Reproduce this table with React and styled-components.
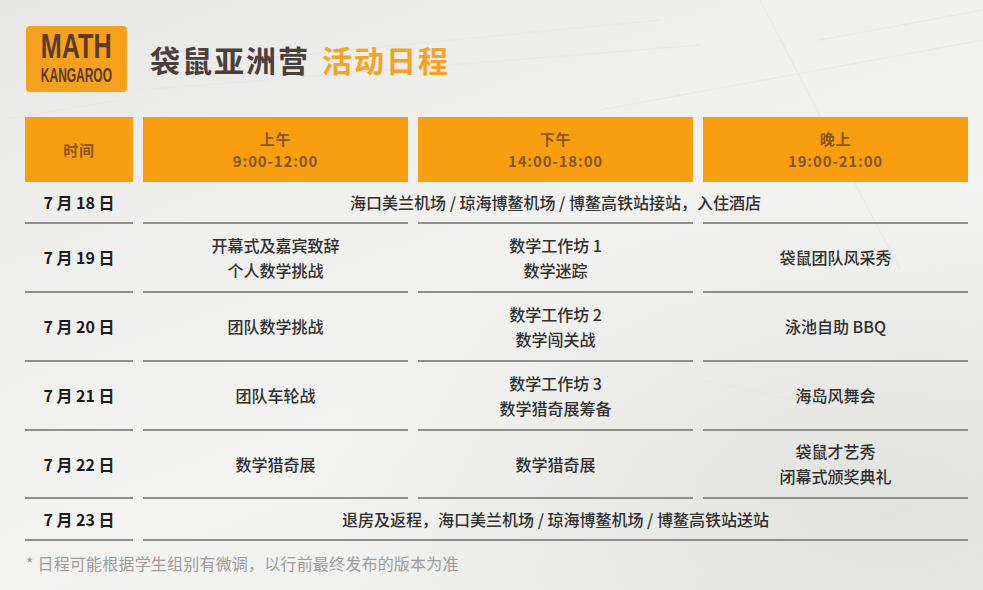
import React from 'react';
import styled, { createGlobalStyle } from 'styled-components';

const Global = createGlobalStyle`
  html, body { margin: 0; padding: 0; }
  body {
    width: 983px;
    height: 590px;
    overflow: hidden;
    font-family: "Noto Sans CJK SC", "Noto Sans", sans-serif;
  }
`;

const Page = styled.div`
  position: relative;
  width: 983px;
  height: 590px;
  box-sizing: border-box;
  padding: 26px 15px 0 25px;
  overflow: hidden;
  background:
    radial-gradient(ellipse at 90% 85%, rgba(215,215,212,0.55) 0%, rgba(240,240,238,0) 45%),
    linear-gradient(160deg, #e7e7e5 0%, #efefed 30%, #f3f3f1 60%, #eeeeec 100%);
`;

const Backdrop = styled.svg`
  position: absolute;
  inset: 0;
  pointer-events: none;
`;

const Content = styled.div`
  position: relative;
  display: flex;
  flex-direction: column;
`;

const TopBar = styled.div`
  display: flex;
  align-items: center;
  gap: 23px;
  padding-left: 1px;
`;

const Logo = styled.div`
  width: 101px;
  height: 66px;
  box-sizing: border-box;
  background: #f6a11c;
  border-radius: 4px;
  display: flex;
  flex-direction: column;
  align-items: center;
  justify-content: center;
  color: #5a3b27;
  font-family: "Liberation Sans", Arial, sans-serif;
  font-weight: 700;
  padding-bottom: 4px;
`;

const LogoWord = styled.span`
  display: block;
  font-size: ${p => p.$size}px;
  line-height: ${p => p.$lh}px;
  transform: scaleX(${p => p.$sx});
  white-space: nowrap;
`;

const Title = styled.h1`
  margin: 0;
  font-size: 30px;
  line-height: 36px;
  font-weight: 700;
  letter-spacing: 2px;
  color: #4a3f3b;
  white-space: nowrap;
`;

const Accent = styled.span`
  color: #f4a323;
  margin-left: 12px;
`;

const Table = styled.div`
  margin-top: 25px;
  display: grid;
  grid-template-columns: 108px 265px 275px 265px;
  column-gap: 10px;
`;

const HeadCell = styled.div`
  height: 65px;
  background: #f99e0f;
  display: flex;
  flex-direction: column;
  align-items: center;
  justify-content: center;
  color: #87561a;
  font-size: 15px;
  line-height: 22px;
  font-weight: 700;
  letter-spacing: 0.8px;
`;

const Cell = styled.div`
  height: ${p => p.$h}px;
  border-bottom: 2px solid #8e8e8c;
  display: flex;
  flex-direction: column;
  align-items: center;
  justify-content: center;
  font-size: 16px;
  line-height: 25px;
  font-weight: 500;
  color: #2f2f2f;
  text-align: center;
  white-space: nowrap;
`;

const DateCell = styled(Cell)`
  font-weight: 700;
  color: #1b1b1b;
`;

const SpanCell = styled.div`
  grid-column: 2 / 5;
  display: grid;
  grid-template-columns: 265px 275px 265px;
  grid-template-rows: ${p => p.$h}px 2px;
  column-gap: 10px;
  border-bottom: ${p => (p.$solid ? '2px solid #8e8e8c' : 'none')};
  height: ${p => (p.$solid ? `${p.$h}px` : 'auto')};
`;

const SpanText = styled.div`
  grid-column: 1 / 4;
  grid-row: 1;
  display: flex;
  align-items: center;
  justify-content: center;
  font-size: 16px;
  font-weight: 500;
  color: #2f2f2f;
  white-space: nowrap;
`;

const Rule = styled.div`
  grid-row: 2;
  background: #8e8e8c;
`;

const Note = styled.p`
  margin: 11px 0 0 1px;
  font-size: 16px;
  line-height: 22px;
  letter-spacing: 0.2px;
  color: #9c9c9a;
  white-space: nowrap;
`;

const rows = [
  { date: '7 月 19 日', h: 67, cells: [['开幕式及嘉宾致辞', '个人数学挑战'], ['数学工作坊 1', '数学迷踪'], ['袋鼠团队风采秀']] },
  { date: '7 月 20 日', h: 67, cells: [['团队数学挑战'], ['数学工作坊 2', '数学闯关战'], ['泳池自助 BBQ']] },
  { date: '7 月 21 日', h: 67, cells: [['团队车轮战'], ['数学工作坊 3', '数学猎奇展筹备'], ['海岛风舞会']] },
  { date: '7 月 22 日', h: 66, cells: [['数学猎奇展'], ['数学猎奇展'], ['袋鼠才艺秀', '闭幕式颁奖典礼']] },
];

export default function App() {
  return (
    <>
      <Global />
      <Page>
        <Backdrop width="983" height="590" viewBox="0 0 983 590">
          <g stroke="#e6e6e3" strokeWidth="1.5" fill="none" opacity="0.7">
            <path d="M140 70 L660 20" />
            <path d="M140 90 L700 45" />
            <path d="M760 0 L900 270" />
            <path d="M820 40 L983 10" />
            <path d="M600 110 L983 40" />
            <path d="M0 120 L120 100" />
            <path d="M700 380 L983 440" />
            <path d="M820 460 L983 470" />
          </g>
        </Backdrop>
        <Content>
          <TopBar>
            <Logo>
              <LogoWord $size={35} $lh={36} $sx={0.72}>MATH</LogoWord>
              <LogoWord $size={21} $lh={22} $sx={0.57}>KANGAROO</LogoWord>
            </Logo>
            <Title>
              袋鼠亚洲营<Accent>活动日程</Accent>
            </Title>
          </TopBar>

          <Table>
            <HeadCell>时间</HeadCell>
            <HeadCell>
              <span>上午</span>
              <span>9:00-12:00</span>
            </HeadCell>
            <HeadCell>
              <span>下午</span>
              <span>14:00-18:00</span>
            </HeadCell>
            <HeadCell>
              <span>晚上</span>
              <span>19:00-21:00</span>
            </HeadCell>

            <DateCell $h={40}>7 月 18 日</DateCell>
            <SpanCell $h={40}>
              <SpanText>海口美兰机场 / 琼海博鳌机场 / 博鳌高铁站接站，入住酒店</SpanText>
              <Rule />
              <Rule />
              <Rule />
            </SpanCell>

            {rows.map(r => (
              <React.Fragment key={r.date}>
                <DateCell $h={r.h}>{r.date}</DateCell>
                {r.cells.map((lines, i) => (
                  <Cell key={i} $h={r.h}>
                    {lines.map(l => (
                      <span key={l}>{l}</span>
                    ))}
                  </Cell>
                ))}
              </React.Fragment>
            ))}

            <DateCell $h={40}>7 月 23 日</DateCell>
            <SpanCell $h={40} $solid>
              <SpanText>退房及返程，海口美兰机场 / 琼海博鳌机场 / 博鳌高铁站送站</SpanText>
            </SpanCell>
          </Table>

          <Note>* 日程可能根据学生组别有微调，以行前最终发布的版本为准</Note>
        </Content>
      </Page>
    </>
  );
}
